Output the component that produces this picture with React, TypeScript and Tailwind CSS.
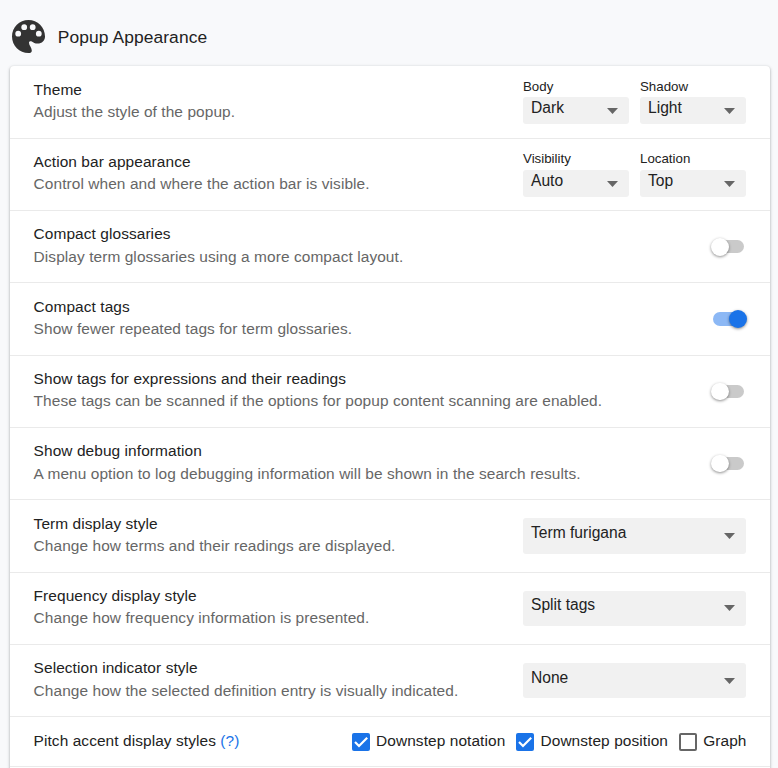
import React from 'react';

function PaletteIcon() {
  return (
    <svg className="block h-[33px] w-[33px]" viewBox="0 0 33 33" fill="#333333">
      <path
        fillRule="evenodd"
        d="M16.5 0C7.4 0 0 7.4 0 16.5S7.4 33 16.5 33C18.700 33 19.800 32.500 19.800 30.500C19.800 27.500 17 25.500 17 22.700C17 21.100 18.500 20.800 19.800 21.500C21.500 22.500 23 23.600 25.500 23.600C30 23.600 33 20.500 33 16.500C33 7.400 25.600 0 16.500 0ZM6.200 10.800a2.900 2.900 0 1 1 0 5.800a2.900 2.900 0 1 1 0-5.800ZM12.200 4.300a2.900 2.900 0 1 1 0 5.800a2.900 2.900 0 1 1 0-5.800ZM20.700 4.300a2.900 2.900 0 1 1 0 5.800a2.900 2.900 0 1 1 0-5.800ZM26.800 10.800a2.900 2.900 0 1 1 0 5.800a2.900 2.900 0 1 1 0-5.800Z"
      />
    </svg>
  );
}

function Select({ value, small = false }: { value: string; small?: boolean }) {
  return (
    <div
      className={
        'flex items-center justify-between rounded-[3px] bg-[#f1f1f1] pl-2 pr-[11px] text-[15.600px] tracking-normal ' +
        (small ? 'h-[27px] w-[106px]' : 'h-[35.400px] w-[223px]')
      }
    >
      <span className={small ? '-mt-[5px]' : '-mt-[5.600px]'}>{value}</span>
      <svg className={'block h-[6px] w-[11px] ' + (small ? 'mt-[0.600px]' : '')} viewBox="0 0 11 6" fill="#666666">
        <path d="M0 0H11L5.500 6Z" />
      </svg>
    </div>
  );
}

function LabeledSelect({ label, value }: { label: string; value: string }) {
  return (
    <div className="-mt-[3px] flex flex-col">
      <span className="pb-[1.600px] text-[13.3px] leading-[19px] tracking-normal">{label}</span>
      <Select value={value} small />
    </div>
  );
}

function Toggle({ on = false }: { on?: boolean }) {
  return (
    <div
      className={
        'mr-[2px] flex h-[13.200px] w-[31px] items-center rounded-full ' +
        (on ? 'justify-end bg-[#8cb8f5]' : 'bg-[#cacaca]')
      }
    >
      <div
        className={
          'h-[17.600px] w-[17.600px] shrink-0 rounded-full shadow-[0_1px_3px_rgba(0,0,0,0.45)] ' +
          (on ? '-mr-[3px] bg-[#1a73e8]' : '-ml-[2px] bg-white')
        }
      />
    </div>
  );
}

function Checkbox({ label, checked = false }: { label: string; checked?: boolean }) {
  return (
    <div className="flex items-center gap-[6.100px]">
      {checked ? (
        <svg className="mt-[2px] block h-[18px] w-[18px] rounded-[2px] bg-[#1a73e8]" viewBox="0 0 18 18" fill="none">
          <path d="M3 9L7 13L15.200 4.800" stroke="white" strokeWidth="2.200" />
        </svg>
      ) : (
        <div className="mt-[2px] h-[18px] w-[18px] rounded-[2px] border-2 border-[#666666]" />
      )}
      <span>{label}</span>
    </div>
  );
}

function Row({ title, desc, children }: { title: string; desc: string; children: React.ReactNode }) {
  return (
    <div className="flex h-[72.300px] items-center justify-between border-t border-[#eaeaea] pl-[23.600px] pr-6 first:border-transparent">
      <div className="pb-[2px]">
        <div>{title}</div>
        <div className="text-[#666666]">{desc}</div>
      </div>
      {children}
    </div>
  );
}

export default function App() {
  return (
    <div className="h-[768px] overflow-hidden bg-[#f8f9fb] font-['Liberation_Sans',Arial,sans-serif] text-[15.450px] leading-[22.330px] tracking-[0.080px] text-[#222222]">
      <div className="flex h-[65.500px] items-center pl-3 pt-[8px]">
        <PaletteIcon />
        <h1 className="ml-[12.700px] text-[17.400px] tracking-[0.100px]">Popup Appearance</h1>
      </div>
      <div className="ml-[10px] mr-2 h-[760px] rounded-[4px] bg-white shadow-[0_1px_2px_rgba(60,64,67,0.3),0_1px_3px_1px_rgba(60,64,67,0.15)]">
        <Row title="Theme" desc="Adjust the style of the popup.">
          <div className="flex gap-[11px]">
            <LabeledSelect label="Body" value="Dark" />
            <LabeledSelect label="Shadow" value="Light" />
          </div>
        </Row>
        <Row title="Action bar appearance" desc="Control when and where the action bar is visible.">
          <div className="flex gap-[11px]">
            <LabeledSelect label="Visibility" value="Auto" />
            <LabeledSelect label="Location" value="Top" />
          </div>
        </Row>
        <Row title="Compact glossaries" desc="Display term glossaries using a more compact layout.">
          <Toggle />
        </Row>
        <Row title="Compact tags" desc="Show fewer repeated tags for term glossaries.">
          <Toggle on />
        </Row>
        <Row
          title="Show tags for expressions and their readings"
          desc="These tags can be scanned if the options for popup content scanning are enabled."
        >
          <Toggle />
        </Row>
        <Row
          title="Show debug information"
          desc="A menu option to log debugging information will be shown in the search results."
        >
          <Toggle />
        </Row>
        <Row title="Term display style" desc="Change how terms and their readings are displayed.">
          <Select value="Term furigana" />
        </Row>
        <Row title="Frequency display style" desc="Change how frequency information is presented.">
          <Select value="Split tags" />
        </Row>
        <Row
          title="Selection indicator style"
          desc="Change how the selected definition entry is visually indicated."
        >
          <Select value="None" />
        </Row>
        <div className="flex h-[50px] items-center justify-between border-t border-[#eaeaea] pb-[2px] pl-[23.600px] pr-[23.500px]">
          <div>
            Pitch accent display styles <a className="text-[#1a73e8]">(?)</a>
          </div>
          <div className="flex gap-[11.100px]">
            <Checkbox label="Downstep notation" checked />
            <Checkbox label="Downstep position" checked />
            <Checkbox label="Graph" />
          </div>
        </div>
        <div className="border-t border-[#eaeaea]" />
      </div>
    </div>
  );
}
